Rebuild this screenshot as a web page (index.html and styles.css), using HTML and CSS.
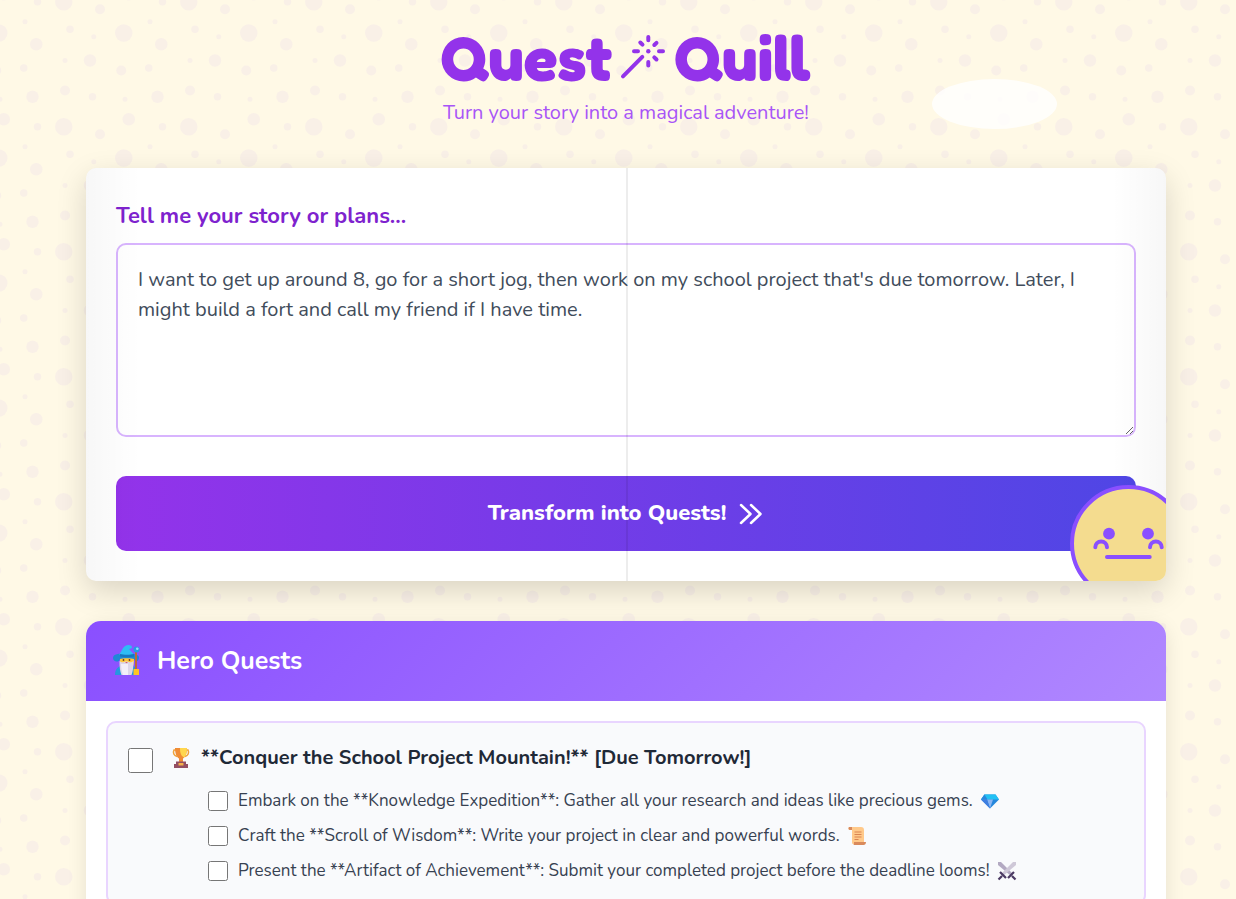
FILE: index.html
```html
<!DOCTYPE html>
<html lang="en">
<head>
<meta charset="utf-8">
<meta name="viewport" content="width=device-width, initial-scale=1">
<title>Quest Quill</title>
<link rel="stylesheet" href="styles.css">
</head>
<body>
<div class="cloud" aria-hidden="true"></div>
<div class="page">
  <header class="masthead">
    <h1 class="logo">
      <span>Quest</span>
      <svg class="logo-wand" viewBox="0 0 46 46" aria-hidden="true">
        <path d="M3 42.300 22.300 22.800M28.300 3v3.300M28.300 28v3.500M14 17.300h4M39 17.300h4M20.300 8.500l2.200 2.200M34.300 11l2.200-2.200M34.300 23.300l2.200 2.200"/>
        <circle cx="28.300" cy="17.300" r="2.200"/>
      </svg>
      <span>Quill</span>
    </h1>
    <p class="tagline">Turn your story into a magical adventure!</p>
  </header>

  <main class="content">
    <form class="book">
      <label class="book-label" for="story">Tell me your story or plans...</label>
      <textarea class="book-input" id="story" rows="5">I want to get up around 8, go for a short jog, then work on my school project that's due tomorrow. Later, I might build a fort and call my friend if I have time.</textarea>
      <button class="book-submit" type="button">
        <span>Transform into Quests!</span>
        <svg class="chevrons" viewBox="0 0 26 26" aria-hidden="true"><path d="m3 4 9.500 9L3 22M13 4l9.500 9-9.500 9"/></svg>
      </button>
      <svg class="buddy" viewBox="0 0 125 125" aria-hidden="true">
        <circle class="buddy-head" cx="62.500" cy="62.500" r="56.500"/>
        <circle class="buddy-eye" cx="43" cy="52.700" r="5.900"/>
        <circle class="buddy-eye" cx="82" cy="52.700" r="5.900"/>
        <path class="buddy-line" d="M29.300 66.300a5.850 5.850 0 0 1 11.700 0M84 66.300a5.850 5.850 0 0 1 11.700 0M41 76h42.700"/>
      </svg>
    </form>

    <section class="quests">
      <header class="quests-head">
        <svg class="wizard" viewBox="0 0 30 30" aria-hidden="true">
          <path fill="#2796e0" d="M2 29c0-6 3-9 8-9h9c3 0 5 3 5 9z"/>
          <path fill="#ffc83d" d="M7 11h14v5a7 7 0 0 1-14 0z"/>
          <path fill="#1d88d6" d="M0 12C0 8 6 7.500 13 7.500s13 .5 13 4c0 4-4 5-5 1.500-2-1-12-1-14 0-1 4-7 3-7-1z"/>
          <path fill="#2ebcf5" d="M6 8.500C9 6 9 0 15-1c4-.5 5 3 3 3.500l-2 .5 5 5.500c-4 1-11 1-15 0z"/>
          <path fill="#1676c0" d="M7 8c4 1 10 1 14 0v2.500c-4 1-10 1-14 0z"/>
          <circle cx="10.500" cy="14" r=".9" fill="#6b3a2e"/><circle cx="16.500" cy="14" r=".9" fill="#6b3a2e"/>
          <path fill="#ddd6e9" d="M6.500 15c3 2.500 4.500.5 7 .5s4 2 7-.500c0 6-.5 10-2 14h-10c-1.500-4-2-8-2-14z"/>
          <path fill="#f3eef9" d="M8 18h7v11h-5c-1-3-2-7-2-11z"/>
          <path fill="#d85c62" d="M12 16h3l-1.500 1.200z"/>
          <path stroke="#bd6b35" stroke-width="2" d="M23 5v23"/>
          <circle cx="23.500" cy="3.500" r="3" fill="#239ce5"/><circle cx="24.300" cy="2.700" r="1.300" fill="#8fe0ff"/>
          <path fill="#ffc423" d="M20.500 23h5.500v6h-5.500z"/>
        </svg>
        <h2 class="quests-title">Hero Quests</h2>
      </header>
      <div class="quests-body">
        <article class="quest">
          <input class="tick tick-large" type="checkbox" id="q1">
          <div class="quest-main">
            <label class="quest-name" for="q1">
              <svg class="emoji" viewBox="0 0 20 20" aria-hidden="true">
                <path fill="none" stroke="#f1a33a" stroke-width="1.600" d="M5 2H3C1.500 5 3 7.500 6 8.500M15 2h2c1.500 3 0 5.500-3 6.500"/>
                <path fill="#f08c35" d="M4 0h12c0 6-2 9.500-4 10.500V14H8v-3.500C6 9.500 4 6 4 0z"/>
                <path fill="#ffd64e" d="M9 0h7c0 5-1 8-3 9.500C10 8 9 5 9 0z"/>
                <path fill="#944f62" d="M5 13.500h10v2.500h2v4H3v-4h2z"/>
                <path fill="#f5b14b" d="M7.500 15h5v2.500h-5z"/>
              </svg>
              <span>**Conquer the School Project Mountain!** [Due Tomorrow!]</span>
            </label>
            <ul class="steps">
              <li class="step">
                <input class="tick" type="checkbox" id="s1">
                <label class="step-name" for="s1"><span>Embark on the **Knowledge Expedition**: Gather all your research and ideas like precious gems.</span>
                  <svg class="emoji" viewBox="0 0 20 20" aria-hidden="true">
                    <path fill="#2587dc" d="M4.500 3.500h11L19 8.500 10 17.500 1 8.500z"/>
                    <path fill="#22c1f4" d="M4.500 3.500h11L19 8.500H1z"/>
                    <path fill="#2a86dc" d="m1 8.500 3.500-5 3 5z"/>
                    <path fill="#8bb5f3" d="M7 8.500h6l-3 9z"/><path fill="#3f7ee0" d="M1 8.500h6l3 9z"/>
                  </svg>
                </label>
              </li>
              <li class="step">
                <input class="tick" type="checkbox" id="s2">
                <label class="step-name" for="s2"><span>Craft the **Scroll of Wisdom**: Write your project in clear and powerful words.</span>
                  <svg class="emoji" viewBox="0 0 20 20" aria-hidden="true">
                    <path fill="#ffc98a" d="M2 1h12c2 0 3 1 3 3v14H6c-1 0-1-1-1-2V4H3C1.500 4 1 2 2 1z"/>
                    <path fill="#d98a5c" d="M2 1h3v3H3C1.500 4 1 2 2 1zM7 16h12c0 2-1 3-2.500 3H6c1 0 1-1 1-3z"/>
                    <path stroke="#d98452" stroke-width="1.100" d="M7.500 6h7M7.500 8.500h7M7.500 11h7M7.500 13.500h4"/>
                  </svg>
                </label>
              </li>
              <li class="step">
                <input class="tick" type="checkbox" id="s3">
                <label class="step-name" for="s3"><span>Present the **Artifact of Achievement**: Submit your completed project before the deadline looms!</span>
                  <svg class="emoji" viewBox="0 0 20 20" aria-hidden="true">
                    <path fill="#b3a9c2" d="M1 1h3l12 12-2 2L1 4z"/><path fill="#cfc8d8" d="M19 1h-3L4 13l2 2L19 4z"/>
                    <path fill="none" stroke="#4b3a63" stroke-width="2.200" d="m3 11 6 6M17 11l-6 6M5 15l-3.500 3.500M15 15l3.500 3.500"/>
                  </svg>
                </label>
              </li>
            </ul>
          </div>
        </article>
      </div>
    </section>
  </main>
</div>
</body>
</html>
```

FILE: styles.css
```css
*, *::before, *::after { box-sizing: border-box; }

html { height: 100%; }

body {
  margin: 0;
  height: 100vh;
  overflow-y: auto;
  scrollbar-width: none;
  position: relative;
  color: #374151;
  font-family: Nunito, "Open Sans", sans-serif;
  font-size: 20px;
  line-height: 30px;
  background-color: #fff9e6;
  background-image: url("data:image/svg+xml,%3Csvg xmlns='http://www.w3.org/2000/svg' width='100' height='100' viewBox='0 0 100 100'%3E%3Cg fill='%238a4fff' fill-opacity='.05'%3E%3Ccircle cx='11' cy='11' r='7'/%3E%3Ccircle cx='59' cy='36' r='7'/%3E%3Ccircle cx='16' cy='33' r='3'/%3E%3Ccircle cx='79' cy='64' r='3'/%3E%3Ccircle cx='34' cy='87' r='3'/%3E%3Ccircle cx='90' cy='11' r='3'/%3E%3Ccircle cx='12' cy='82' r='4'/%3E%3Ccircle cx='40' cy='17' r='4'/%3E%3Ccircle cx='63' cy='5' r='5'/%3E%3Ccircle cx='57' cy='66' r='4'/%3E%3Ccircle cx='86' cy='87' r='5'/%3E%3Ccircle cx='32' cy='58' r='5'/%3E%3Ccircle cx='89' cy='45' r='5'/%3E%3Ccircle cx='80' cy='27' r='2'/%3E%3Ccircle cx='60' cy='89' r='2'/%3E%3Ccircle cx='35' cy='39' r='2'/%3E%3Ccircle cx='12' cy='58' r='2'/%3E%3C/g%3E%3C/svg%3E");
  background-size: 125px 125px;
  background-position: 50px -12px;
}

.cloud {
  position: absolute;
  top: 79px;
  right: 179px;
  width: 125px;
  height: 50px;
  border-radius: 50%;
  background: #fff;
  opacity: 0.8;
}

.page { padding: 18px 70px 40px 86px; }

.masthead {
  display: flex;
  flex-direction: column;
  align-items: center;
  gap: 2px;
  padding-bottom: 40px;
}

.logo {
  display: flex;
  align-items: center;
  gap: 8px;
  margin: 0;
  color: #9333ea;
  font-family: Fredoka, "Fredoka One", "Baloo 2", Nunito, sans-serif;
  font-size: 63px;
  font-weight: 700;
  line-height: 78px;
}

.logo-wand {
  width: 46px;
  height: 46px;
  fill: #9333ea;
  stroke: #9333ea;
  stroke-width: 4;
  stroke-linecap: round;
}
.logo-wand circle { stroke: none; }

.tagline {
  margin: 0;
  color: #a855f7;
}

.content {
  display: flex;
  flex-direction: column;
  gap: 40px;
}

/* Story card, drawn as an open book */
.book {
  position: relative;
  display: flex;
  flex-direction: column;
  padding: 30px;
  overflow: hidden;
  border-radius: 10px;
  background: #fff;
  box-shadow: 0 10px 30px rgba(0, 0, 0, 0.15);
}
.book::before {
  content: "";
  position: absolute;
  inset: 0;
  pointer-events: none;
  background: linear-gradient(to right, rgba(0, 0, 0, 0.03), transparent 5%, transparent 95%, rgba(0, 0, 0, 0.03));
}
.book::after {
  content: "";
  position: absolute;
  top: 0;
  bottom: 0;
  left: 50%;
  width: 2px;
  background: rgba(0, 0, 0, 0.07);
}

.book-label {
  margin-bottom: 9px;
  color: #7e22ce;
  font-size: 22px;
  font-weight: 700;
  line-height: 36px;
}

.book-input {
  display: block;
  width: 100%;
  margin: 0 0 39px;
  padding: 20px;
  border: 2px solid #d8b4fe;
  border-radius: 10px;
  background: #fff;
  color: #414c5b;
  font: inherit;
  resize: vertical;
}

.book-submit {
  display: flex;
  align-items: center;
  justify-content: center;
  gap: 12px;
  padding: 20px;
  border: 0;
  border-radius: 10px;
  background: linear-gradient(to right, #9333ea, #4f46e5);
  color: #fff;
  font: inherit;
  font-size: 22px;
  font-weight: 800;
  line-height: 35px;
}

.chevrons {
  width: 26px;
  height: 26px;
  fill: none;
  stroke: #fff;
  stroke-width: 2.500;
  stroke-linecap: round;
  stroke-linejoin: round;
}

.buddy {
  position: absolute;
  right: -25px;
  bottom: -25px;
  width: 125px;
  height: 125px;
}
.buddy-head { fill: #f4dc8f; stroke: #8a4fff; stroke-width: 4; }
.buddy-eye { fill: #8a4fff; }
.buddy-line { fill: none; stroke: #8a4fff; stroke-width: 4; stroke-linecap: round; }

.quests {
  overflow: hidden;
  border-radius: 15px;
  background: #fff;
  box-shadow: 0 5px 20px rgba(0, 0, 0, 0.1);
}

.quests-head {
  display: flex;
  align-items: center;
  gap: 14px;
  padding: 20px 27px;
  background: linear-gradient(135deg, #8a4fff, #b088ff);
}
.wizard { width: 30px; height: 30px; overflow: visible; }
.quests-title {
  margin: 0;
  color: #fff;
  font-size: 25px;
  font-weight: 700;
  line-height: 40px;
}

.quests-body { padding: 20px; }

.quest {
  display: flex;
  align-items: flex-start;
  gap: 18px;
  padding: 20px;
  border: 2px solid #e9d5ff;
  border-radius: 10px;
  background: #f9fafc;
}
.quest-main { flex: 1; }

.tick {
  flex: none;
  width: 20px;
  height: 20px;
  margin: 0;
}
.tick-large {
  width: 25px;
  height: 25px;
  margin-top: 5px;
}

.quest-name {
  display: flex;
  align-items: center;
  gap: 10px;
  color: #1f2937;
  font-weight: 700;
}

.steps {
  display: flex;
  flex-direction: column;
  gap: 10px;
  margin: 15px 0 0;
  padding: 0 0 0 37px;
  list-style: none;
}
.step {
  display: flex;
  align-items: center;
  gap: 10px;
}
.step-name {
  display: flex;
  align-items: center;
  gap: 7px;
  font-size: 17px;
  line-height: 25px;
}
.emoji { width: 20px; height: 20px; }
```
